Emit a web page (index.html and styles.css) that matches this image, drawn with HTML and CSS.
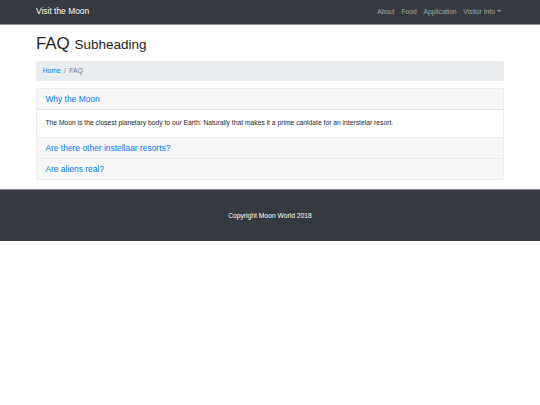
FILE: index.html
```html
<!DOCTYPE html>
<html>
	<head>
		<title>Visit the Moon - FAQ</title>
		<link rel="stylesheet" href="styles.css">
	</head>
	<body>
		<nav class="navbar">
			<div class="container nav-inner">
				<a class="brand" href="#">Visit the Moon</a>
				<ul class="nav-links">
					<li><a href="#">About</a></li>
					<li><a href="#">Food</a></li>
					<li><a href="#">Application</a></li>
					<li><a href="#" class="dropdown">Visitor Info</a></li>
				</ul>
			</div>
		</nav>

		<div class="container">
			<h1>FAQ <small>Subheading</small></h1>

			<ol class="breadcrumb">
				<li><a href="#">Home</a></li>
				<li class="active">FAQ</li>
			</ol>

			<div class="accordion">
				<div class="card">
					<div class="card-header">
						<h5><a href="#">Why the Moon</a></h5>
					</div>
					<div class="card-body">
						The Moon is the closest planetary body to our Earth. Naturally that makes it a prime canidate for an interstelar resort.
					</div>
				</div>
				<div class="card">
					<div class="card-header">
						<h5><a href="#">Are there other instellaar resorts?</a></h5>
					</div>
				</div>
				<div class="card">
					<div class="card-header">
						<h5><a href="#">Are aliens real?</a></h5>
					</div>
				</div>
			</div>
		</div>

		<footer class="footer">
			<div class="container">
				<p>Copyright Moon World 2018</p>
			</div>
		</footer>
	</body>
</html>
```

FILE: styles.css
```css
			html {
				font-size: 6.746px;
			}

			* {
				box-sizing: border-box;
			}

			body {
				margin: 0;
				font-family: "Liberation Sans", Arial, sans-serif;
				font-size: 1rem;
				line-height: 1.5;
				color: #212529;
				background-color: #ffffff;
			}

			a {
				color: #007bff;
				text-decoration: none;
			}

			.container {
				max-width: 71.25rem;
				margin: 0 auto;
				padding: 0 0.9375rem;
			}

			/* top bar */
			.navbar {
				background-color: #343a40;
				padding: 0.5rem 0;
				box-shadow: 0 1px 0 #8c8f93;
			}

			.nav-inner {
				display: flex;
				align-items: center;
				justify-content: space-between;
			}

			.brand {
				color: #ffffff;
				font-size: 1.25rem;
				padding: 0.3125rem 0;
				margin-right: 1rem;
			}

			.nav-links {
				display: flex;
				list-style: none;
				margin: 0;
				padding: 0;
			}

			.nav-links a {
				display: block;
				padding: 0.5rem;
				color: rgba(255, 255, 255, 0.55);
			}

			.dropdown::after {
				content: "";
				display: inline-block;
				margin-left: 0.255em;
				vertical-align: 0.255em;
				border-top: 0.3em solid;
				border-right: 0.3em solid transparent;
				border-left: 0.3em solid transparent;
			}

			h1 {
				font-size: 2.5rem;
				font-weight: 500;
				line-height: 1.2;
				margin: 1.5rem 0 1rem;
			}

			h1 small {
				font-size: 80%;
				font-weight: 400;
			}

			.breadcrumb {
				display: flex;
				list-style: none;
				margin: 0 0 1rem;
				padding: 0.75rem 1rem;
				background-color: #e9ecef;
				border-radius: 0.25rem;
			}

			.breadcrumb li + li::before {
				content: "/";
				padding: 0 0.5rem;
				color: #6c757d;
			}

			.breadcrumb .active {
				color: #6c757d;
			}

			.accordion {
				margin-bottom: 1.5rem;
			}

			.card {
				border: 1px solid rgba(0, 0, 0, 0.08);
				border-radius: 0.25rem;
				background-color: #ffffff;
			}

			.card + .card {
				margin-top: -1px;
			}

			.card-header {
				padding: 0.75rem 1.25rem;
				background-color: #f7f7f7;
			}

			.card-header:not(:last-child) {
				border-bottom: 1px solid rgba(0, 0, 0, 0.08);
			}

			.card-header h5 {
				margin: 0;
				font-size: 1.25rem;
				font-weight: 500;
				line-height: 1.2;
			}

			.card-body {
				padding: 1.25rem;
			}

			.footer {
				background-color: #343a40;
				padding: 3rem 0;
				box-shadow: 0 -1px 0 #8c8f93;
			}

			.footer p {
				margin: 0;
				text-align: center;
				color: #ffffff;
			}
```
